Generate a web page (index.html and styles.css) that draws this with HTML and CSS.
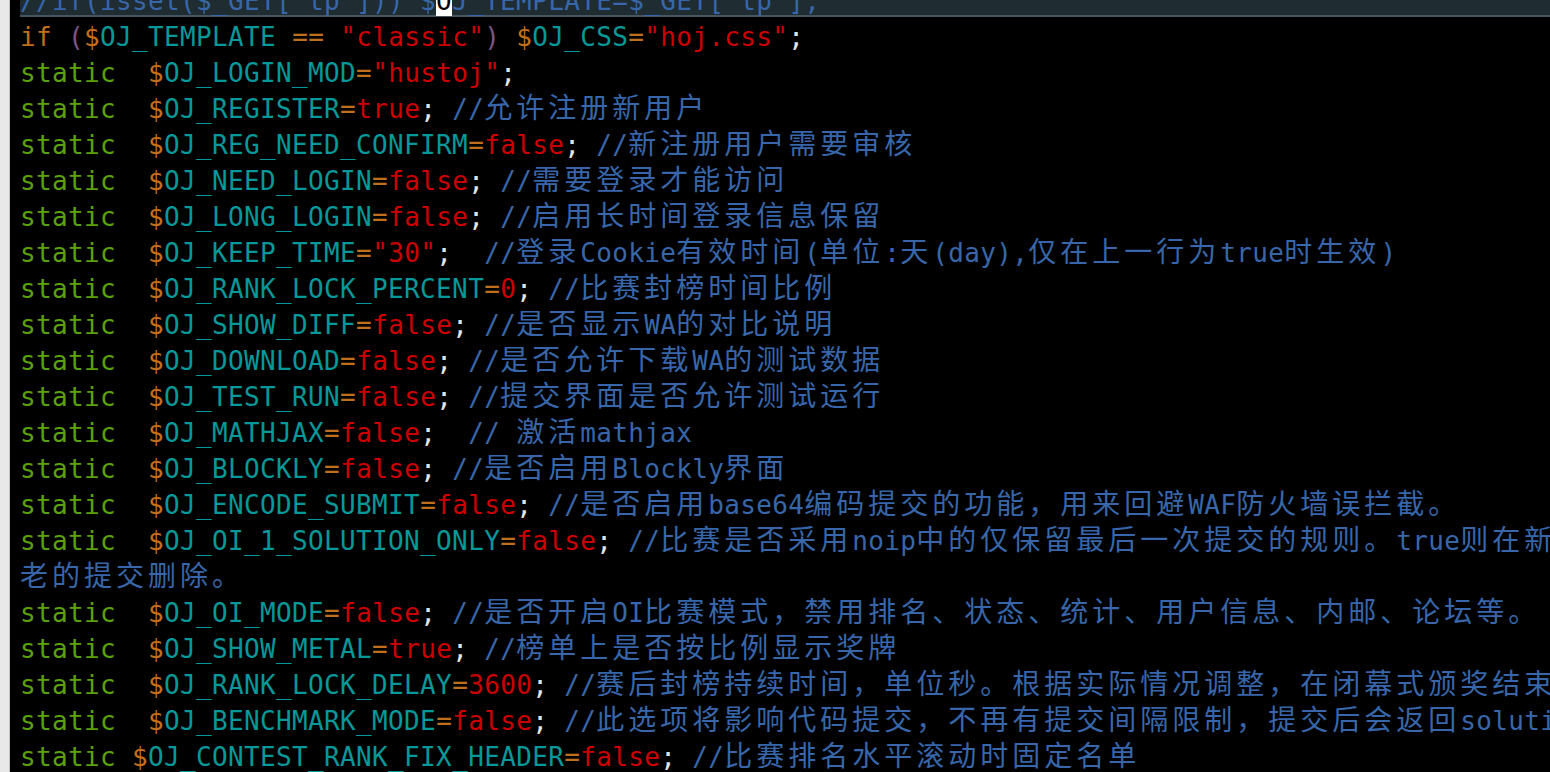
FILE: index.html
```html
<!DOCTYPE html>
<html lang="zh-CN">
<head>
<meta charset="utf-8">
<title>db_info.inc.php</title>
<link rel="stylesheet" href="styles.css">
</head>
<body>
<div class="screen">
  <div class="gutter"></div>
  <div class="term">
    <div class="ln cur"><span class="c">//if(isset($_GET['tp'])) $<span class="cursor">O</span>J_TEMPLATE=$_GET['tp'];</span></div>
    <div class="ln"><span class="o">if</span> <span class="p">(</span><span class="o">$</span><span class="v">OJ_TEMPLATE</span> <span class="o">==</span> <span class="r">"classic"</span><span class="p">)</span> <span class="o">$</span><span class="v">OJ_CSS</span><span class="o">=</span><span class="r">"hoj.css"</span>;</div>
    <div class="ln"><span class="s">static</span>  <span class="o">$</span><span class="v">OJ_LOGIN_MOD</span><span class="o">=</span><span class="r">"hustoj"</span>;</div>
    <div class="ln"><span class="s">static</span>  <span class="o">$</span><span class="v">OJ_REGISTER</span><span class="o">=</span><span class="r">true</span>; <span class="c">//<span class="w">允许注册新用户</span></span></div>
    <div class="ln"><span class="s">static</span>  <span class="o">$</span><span class="v">OJ_REG_NEED_CONFIRM</span><span class="o">=</span><span class="r">false</span>; <span class="c">//<span class="w">新注册用户需要审核</span></span></div>
    <div class="ln"><span class="s">static</span>  <span class="o">$</span><span class="v">OJ_NEED_LOGIN</span><span class="o">=</span><span class="r">false</span>; <span class="c">//<span class="w">需要登录才能访问</span></span></div>
    <div class="ln"><span class="s">static</span>  <span class="o">$</span><span class="v">OJ_LONG_LOGIN</span><span class="o">=</span><span class="r">false</span>; <span class="c">//<span class="w">启用长时间登录信息保留</span></span></div>
    <div class="ln"><span class="s">static</span>  <span class="o">$</span><span class="v">OJ_KEEP_TIME</span><span class="o">=</span><span class="r">"30"</span>;  <span class="c">//<span class="w">登录</span>Cookie<span class="w">有效时间</span>(<span class="w">单位</span>:<span class="w">天</span>(day),<span class="w">仅在上一行为</span>true<span class="w">时生效</span>)</span></div>
    <div class="ln"><span class="s">static</span>  <span class="o">$</span><span class="v">OJ_RANK_LOCK_PERCENT</span><span class="o">=</span><span class="r">0</span>; <span class="c">//<span class="w">比赛封榜时间比例</span></span></div>
    <div class="ln"><span class="s">static</span>  <span class="o">$</span><span class="v">OJ_SHOW_DIFF</span><span class="o">=</span><span class="r">false</span>; <span class="c">//<span class="w">是否显示</span>WA<span class="w">的对比说明</span></span></div>
    <div class="ln"><span class="s">static</span>  <span class="o">$</span><span class="v">OJ_DOWNLOAD</span><span class="o">=</span><span class="r">false</span>; <span class="c">//<span class="w">是否允许下载</span>WA<span class="w">的测试数据</span></span></div>
    <div class="ln"><span class="s">static</span>  <span class="o">$</span><span class="v">OJ_TEST_RUN</span><span class="o">=</span><span class="r">false</span>; <span class="c">//<span class="w">提交界面是否允许测试运行</span></span></div>
    <div class="ln"><span class="s">static</span>  <span class="o">$</span><span class="v">OJ_MATHJAX</span><span class="o">=</span><span class="r">false</span>;  <span class="c">// <span class="w">激活</span>mathjax</span></div>
    <div class="ln"><span class="s">static</span>  <span class="o">$</span><span class="v">OJ_BLOCKLY</span><span class="o">=</span><span class="r">false</span>; <span class="c">//<span class="w">是否启用</span>Blockly<span class="w">界面</span></span></div>
    <div class="ln"><span class="s">static</span>  <span class="o">$</span><span class="v">OJ_ENCODE_SUBMIT</span><span class="o">=</span><span class="r">false</span>; <span class="c">//<span class="w">是否启用</span>base64<span class="w">编码提交的功能，用来回避</span>WAF<span class="w">防火墙误拦截。</span></span></div>
    <div class="ln"><span class="s">static</span>  <span class="o">$</span><span class="v">OJ_OI_1_SOLUTION_ONLY</span><span class="o">=</span><span class="r">false</span>; <span class="c">//<span class="w">比赛是否采用</span>noip<span class="w">中的仅保留最后一次提交的规则。</span>true<span class="w">则在新</span></span></div>
    <div class="ln"><span class="c"><span class="w">老的提交删除。</span></span></div>
    <div class="ln"><span class="s">static</span>  <span class="o">$</span><span class="v">OJ_OI_MODE</span><span class="o">=</span><span class="r">false</span>; <span class="c">//<span class="w">是否开启</span>OI<span class="w">比赛模式，禁用排名、状态、统计、用户信息、内邮、论坛等。</span></span></div>
    <div class="ln"><span class="s">static</span>  <span class="o">$</span><span class="v">OJ_SHOW_METAL</span><span class="o">=</span><span class="r">true</span>; <span class="c">//<span class="w">榜单上是否按比例显示奖牌</span></span></div>
    <div class="ln"><span class="s">static</span>  <span class="o">$</span><span class="v">OJ_RANK_LOCK_DELAY</span><span class="o">=</span><span class="r">3600</span>; <span class="c">//<span class="w">赛后封榜持续时间，单位秒。根据实际情况调整，在闭幕式颁奖结束</span></span></div>
    <div class="ln"><span class="s">static</span>  <span class="o">$</span><span class="v">OJ_BENCHMARK_MODE</span><span class="o">=</span><span class="r">false</span>; <span class="c">//<span class="w">此选项将影响代码提交，不再有提交间隔限制，提交后会返回</span>solution</span></div>
    <div class="ln"><span class="s">static</span> <span class="o">$</span><span class="v">OJ_CONTEST_RANK_FIX_HEADER</span><span class="o">=</span><span class="r">false</span>; <span class="c">//<span class="w">比赛排名水平滚动时固定名单</span></span></div>
  </div>
</div>
</body>
</html>
```

FILE: styles.css
```css
html, body {
  margin: 0;
  padding: 0;
  background: #000;
  height: 100%;
  overflow: hidden;
}

.screen {
  display: flex;
  height: 772px;
  overflow: hidden;
}

.gutter {
  flex: 0 0 9px;
  background: #e8e8e8;
  border-right: 1px solid #c2c2c2;
}

.term {
  flex: 1;
  min-width: 0;
  margin-top: -19px;
  padding-left: 10px;
  font-family: "DejaVu Sans Mono", "Noto Sans CJK SC", monospace;
  font-size: 26px;
  letter-spacing: 0.35px;
  color: #e6e6e6;
  overflow: hidden;
}

.ln {
  box-sizing: border-box;
  height: 36px;
  padding-top: 4px;
  line-height: 32px;
  white-space: pre;
}

.cur {
  background: #1f2c31;
  box-shadow: inset 0 -2px 0 #45565e;
}

.cursor {
  background: #ffffff;
  color: #000000;
}

.w {
  font-family: "Noto Sans CJK SC", sans-serif;
  font-size: 28px;
  letter-spacing: 4px;
  line-height: 0.9;
}

.o { color: #c0701c; }
.s { color: #5aa10e; }
.v { color: #06989a; }
.p { color: #7b5584; }
.r { color: #cc0000; }
.c { color: #3767aa; }
```
